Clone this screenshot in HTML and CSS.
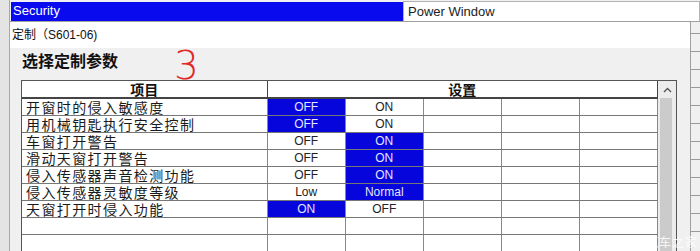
FILE: index.html
```html
<!DOCTYPE html>
<html lang="zh-CN">
<head>
    <meta charset="UTF-8">
    <title>定制 (S601-06)</title>
    <link rel="stylesheet" href="styles.css">
</head>
<body>
    <div class="screen">
        <div class="edge"></div>
        <div class="main">
            <div class="tabs">
                <div class="tab active">Security</div>
                <div class="tab">Power Window</div>
            </div>
            <div class="body">
                <div class="dialog">
                    <div class="dialog-title">定制（S601-06)</div>
                    <div class="dialog-panel">
                        <div class="heading">
                            <h2>选择定制参数</h2>
                            <span class="step">3</span>
                        </div>
                        <div class="grid-frame">
                            <table class="settings">
                                <colgroup>
                                    <col class="c-name">
                                    <col class="c-val"><col class="c-val"><col class="c-val"><col class="c-val"><col class="c-val">
                                </colgroup>
                                <thead>
                                    <tr><th>项目</th><th colspan="5">设置</th></tr>
                                </thead>
                                <tbody>
                                    <tr><td class="name">开窗时的侵入敏感度</td><td class="sel">OFF</td><td>ON</td><td></td><td></td><td></td></tr>
                                    <tr><td class="name">用机械钥匙执行安全控制</td><td class="sel">OFF</td><td>ON</td><td></td><td></td><td></td></tr>
                                    <tr><td class="name">车窗打开警告</td><td>OFF</td><td class="sel">ON</td><td></td><td></td><td></td></tr>
                                    <tr><td class="name">滑动天窗打开警告</td><td>OFF</td><td class="sel">ON</td><td></td><td></td><td></td></tr>
                                    <tr><td class="name">侵入传感器声音检测功能</td><td>OFF</td><td class="sel">ON</td><td></td><td></td><td></td></tr>
                                    <tr><td class="name">侵入传感器灵敏度等级</td><td>Low</td><td class="sel">Normal</td><td></td><td></td><td></td></tr>
                                    <tr><td class="name">天窗打开时侵入功能</td><td class="sel">ON</td><td>OFF</td><td></td><td></td><td></td></tr>
                                    <tr><td class="name"></td><td></td><td></td><td></td><td></td><td></td></tr>
                                    <tr><td class="name"></td><td></td><td></td><td></td><td></td><td></td></tr>
                                </tbody>
                            </table>
                            <div class="scrollbar">
                                <div class="arrow">
                                    <svg width="9" height="6" viewBox="0 0 9 6"><path d="M1 5 L4.5 1.5 L8 5" fill="none" stroke="#555" stroke-width="1.4"/></svg>
                                </div>
                                <div class="thumb"></div>
                            </div>
                        </div>
                    </div>
                </div>
                <div class="behind"></div>
            </div>
        </div>
        <div class="watermark">汽车之家</div>
    </div>
</body>
</html>
```

FILE: styles.css
```css
body {
    margin: 0;
    font-family: "Liberation Sans", Arial, "Noto Sans CJK SC", sans-serif;
    background-color: #f0f0f0;
}
.screen {
    position: relative;
    display: flex;
    width: 700px;
    height: 251px;
    overflow: hidden;
}
.edge {
    width: 9px;
    background-color: #e4e4e4;
    border-right: 1px solid #a8a8a8;
}
.main {
    flex: 1;
    display: flex;
    flex-direction: column;
}
.tabs {
    display: flex;
    height: 21px;
    border-bottom: 1px solid #a0a0a0;
    background-color: #f0f0f0;
}
.tab {
    font-size: 13px;
    color: #222;
    background: white;
    border: 1px solid #b4b4b4;
    border-bottom: none;
    flex: 1;
    padding-left: 4px;
    line-height: 19px;
    margin-top: 1px;
}
.tab.active {
    flex: none;
    width: 390px;
    margin: 2px 0 0 1px;
    padding-left: 2px;
    border: none;
    background-color: #0a0aef;
    color: white;
    line-height: 18px;
}
.body {
    flex: 1;
    display: flex;
}
.dialog {
    width: 680px;
    display: flex;
    flex-direction: column;
    border-right: 1px solid #a0a0a0;
}
.dialog-title {
    height: 26px;
    line-height: 26px;
    background: white;
    font-size: 12px;
    padding-left: 2px;
    color: #111;
}
.dialog-panel {
    flex: 1;
    background-color: #f0f0f0;
    padding-left: 11px;
}
.heading {
    display: flex;
    align-items: flex-start;
    height: 32px;
}
.heading h2 {
    margin: 0 0 0 1px;
    font-size: 16px;
    line-height: 24px;
    font-weight: bold;
    color: #111;
    font-family: "Noto Sans CJK SC", sans-serif;
}
.step {
    margin: 3px 0 0 56px;
    font-size: 39px;
    line-height: 30px;
    color: #e32626;
    font-family: "DejaVu Sans", sans-serif;
    font-weight: 300;
}
.grid-frame {
    display: flex;
    width: 654px;
    border: 1px solid #555;
    border-bottom: none;
    background: white;
}
.settings {
    border-collapse: collapse;
    table-layout: fixed;
    width: 636px;
    font-size: 12px;
    color: #222;
}
.c-name {
    width: 245px;
}
.c-val {
    width: 78px;
}
.settings tr {
    height: 17px;
}
.settings th {
    font-family: "Noto Sans CJK SC", sans-serif;
    font-size: 14px;
    line-height: 16px;
    font-weight: bold;
    padding: 0;
    border-right: 1px solid #444;
    border-bottom: 2px solid #444;
    color: #111;
}
.settings td {
    padding: 0;
    text-align: center;
    line-height: 16px;
    border-right: 1px solid #888;
    border-bottom: 1px solid #777;
}
.settings td.name {
    text-align: left;
    padding-left: 4px;
    font-family: "Noto Sans CJK SC", sans-serif;
    font-size: 14px;
    line-height: 16px;
    color: #1a1a1a;
    letter-spacing: 1.4px;
}
.settings td.sel {
    background-color: #0505dc;
    color: #e4e4ff;
}
.scrollbar {
    flex: 1;
    display: flex;
    flex-direction: column;
    background-color: #ececec;
    padding-left: 2px;
}
.arrow {
    height: 17px;
    width: 14px;
    display: flex;
    align-items: center;
    justify-content: center;
}
.thumb {
    flex: 1;
    width: 12px;
    background-color: #cbcbcb;
}
.behind {
    flex: 1;
    background-color: #f0f0f0;
    background-image: repeating-linear-gradient(to bottom, transparent 0, transparent 17px, #9a9a9a 17px, #9a9a9a 18px);
    background-position: 0 -6px;
}
.watermark {
    position: absolute;
    right: 2px;
    bottom: 1px;
    font-family: "Noto Sans CJK SC", sans-serif;
    font-size: 12px;
    color: rgba(255, 255, 255, 0.85);
    letter-spacing: 1px;
}
```
